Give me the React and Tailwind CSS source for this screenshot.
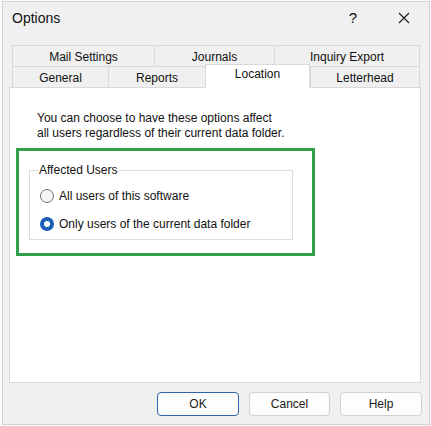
import React from "react";

function Tab({ label, width, selected, last }) {
  if (selected) {
    return (
      <div
        className="relative z-10 h-[24px] -mt-[2px] -mb-[1px] bg-white border-t border-l border-r border-[#d9d9d9] flex items-start justify-center pt-[2px] text-[12px] leading-[15px]"
        style={{ width }}
      >
        {label}
      </div>
    );
  }
  return (
    <div
      className={`h-[21px] bg-[#f0f0f0] border-t border-l border-[#d9d9d9] ${last ? "border-r" : ""} flex items-center justify-center pt-[3px] text-[12px] leading-[15px]`}
      style={{ width }}
    >
      {label}
    </div>
  );
}

function Radio({ checked, label }) {
  return (
    <div className="flex items-center h-[20px]">
      {checked ? (
        <span className="w-[14px] h-[14px] rounded-full bg-[#1c5fb8] flex items-center justify-center">
          <span className="w-[6px] h-[6px] rounded-full bg-white" />
        </span>
      ) : (
        <span className="w-[14px] h-[14px] rounded-full border border-[#6f6f6f] bg-[#f6f6f6]" />
      )}
      <span className="ml-[5px] text-[12px] leading-[15px]">{label}</span>
    </div>
  );
}

function Button({ children, primary, width }) {
  return (
    <button
      className={`h-[24px] rounded-[4px] text-[12px] text-[#1a1a1a] ${
        primary ? "border border-[#2f64ad] bg-[#fdfdfd]" : "border border-[#d0d0d0] bg-[#fdfdfd]"
      }`}
      style={{ width }}
    >
      {children}
    </button>
  );
}

export default function App() {
  return (
    <div className="w-[431px] h-[426px] bg-[#fafafa] [font-family:'Liberation_Sans',Arial,sans-serif] text-[#111111] pt-[1px] pl-[2px]">
      <div className="w-[428px] h-[424px] border border-[#d4d4d4] bg-[#f0f0f0] flex flex-col">
        {/* title bar */}
        <div className="h-[32px] flex items-center pl-[9px] pr-[19px]">
          <span className="text-[14px]">Options</span>
          <span className="ml-auto text-[15px] mr-[41px]">?</span>
          <svg width="12" height="12" viewBox="0 0 12 12" className="text-[#1a1a1a]">
            <path d="M1 1 L11 11 M11 1 L1 11" stroke="currentColor" strokeWidth="1.1" fill="none" />
          </svg>
        </div>

        {/* tab strip + page */}
        <div className="mt-[11px] ml-[6px] w-[412px]">
          <div className="ml-[3px] w-[408px]">
            <div className="flex">
              <Tab label="Mail Settings" width={142} />
              <Tab label="Journals" width={120} />
              <Tab label="Inquiry Export" width={146} last />
            </div>
            <div className="flex items-start">
              <Tab label="General" width={96} />
              <Tab label="Reports" width={97} />
              <Tab label="Location" width={105} selected />
              <Tab label="Letterhead" width={110} last />
            </div>
          </div>

          <div className="h-[296px] bg-white border border-[#d9d9d9] pl-[6px] pt-[23px]">
            <p className="ml-[21px] text-[12px] leading-[15px]">
              You can choose to have these options affect
              <br />
              all users regardless of their current data folder.
            </p>

            <div className="mt-[7px] w-[299px] h-[108px] border-[3px] border-[#31a04b] pl-[10px] pt-[12px]">
              <fieldset className="w-[264px] border border-[#dcdcdc] px-[8px] pb-[5px]">
                <legend className="px-[1px] text-[12px] leading-[15px]">Affected Users</legend>
                <div className="pl-[2px] pt-[8px] flex flex-col gap-[8px]">
                  <Radio label="All users of this software" />
                  <Radio label="Only users of the current data folder" checked />
                </div>
              </fieldset>
            </div>
          </div>
        </div>

        {/* dialog buttons */}
        <div className="mt-[9px] flex justify-end gap-[10px] pr-[7px]">
          <Button primary width={82}>OK</Button>
          <Button width={81}>Cancel</Button>
          <Button width={82}>Help</Button>
        </div>
      </div>
    </div>
  );
}
